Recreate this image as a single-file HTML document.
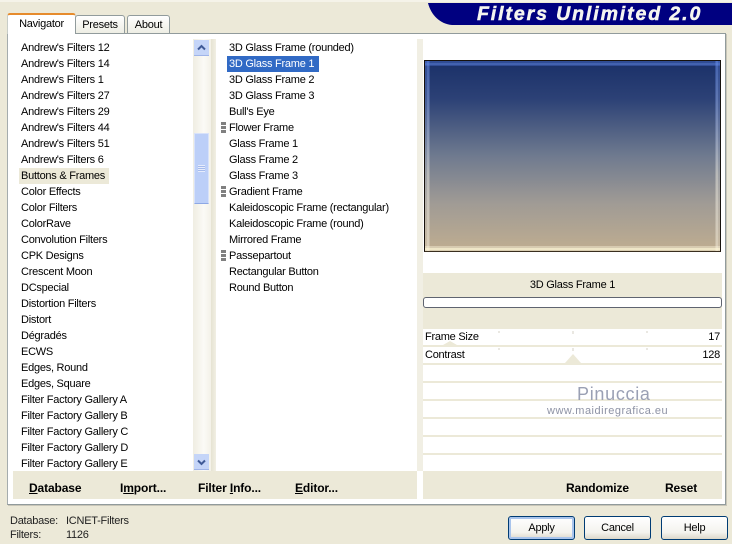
<!DOCTYPE html>
<html><head><meta charset="utf-8"><style>
html,body{margin:0;padding:0}
body{width:732px;height:544px;overflow:hidden;background:#ece9d8;position:relative;font:11px/16px "Liberation Sans",sans-serif;letter-spacing:-.25px;color:#000}
.a{position:absolute;white-space:nowrap}
.it{position:absolute;height:16px;line-height:16px;white-space:nowrap}
.b{font-weight:bold;font-size:12px;letter-spacing:-.12px;position:absolute;white-space:nowrap;line-height:16px}
.btn{position:absolute;top:516px;height:24px;box-sizing:border-box;border:1px solid #003c74;border-radius:3px;background:linear-gradient(#fff,#f4f3ee 70%,#dcd8ca);text-align:center;line-height:23px}
.hl{position:absolute;left:423px;width:299px;height:2px;background:#ece9d8}
</style></head><body>
<div class="a" style="left:0;top:0;width:732px;height:2px;background:#f5f3e9"></div>
<svg class="a" style="left:428px;top:3px" width="304" height="22"><path d="M0 0H304V22H24C12 21 3 12 0 0Z" fill="#000080"/></svg>
<div class="a" style="left:477px;top:4px;font:italic bold 19.5px/21px 'Liberation Sans',sans-serif;color:#f5f5f0;letter-spacing:1.9px;-webkit-text-stroke:.5px #f5f5f0">Filters Unlimited 2.0</div>

<div class="a" style="left:7px;top:33px;width:719px;height:472px;box-sizing:border-box;border:1px solid #919b9c;border-left-color:#a5acad;background:#fff;box-shadow:1px 1px 0 #c9c6b8"></div>
<div class="a" style="left:7px;top:13px;width:67px;height:19px;background:#fff;border:1px solid #c8cdc8;border-bottom:0;border-top:2px solid #e68b2c;border-radius:3px 3px 0 0;text-align:center;line-height:19px">Navigator</div>
<div class="a" style="left:75px;top:15px;width:48px;height:17px;border:1px solid #919b9c;border-radius:3px 3px 0 0;background:linear-gradient(#fff,#eeeee4);text-align:center;line-height:18px">Presets</div>
<div class="a" style="left:127px;top:15px;width:41px;height:17px;border:1px solid #919b9c;border-radius:3px 3px 0 0;background:linear-gradient(#fff,#eeeee4);text-align:center;line-height:18px">About</div>

<!-- left list -->
<div class="a" style="left:19px;top:168px;width:90px;height:16px;background:#ece9d8"></div>
<div class="it" style="left:21px;top:40px">Andrew's Filters 12</div>
<div class="it" style="left:21px;top:56px">Andrew's Filters 14</div>
<div class="it" style="left:21px;top:72px">Andrew's Filters 1</div>
<div class="it" style="left:21px;top:88px">Andrew's Filters 27</div>
<div class="it" style="left:21px;top:104px">Andrew's Filters 29</div>
<div class="it" style="left:21px;top:120px">Andrew's Filters 44</div>
<div class="it" style="left:21px;top:136px">Andrew's Filters 51</div>
<div class="it" style="left:21px;top:152px">Andrew's Filters 6</div>
<div class="it" style="left:21px;top:168px">Buttons &amp; Frames</div>
<div class="it" style="left:21px;top:184px">Color Effects</div>
<div class="it" style="left:21px;top:200px">Color Filters</div>
<div class="it" style="left:21px;top:216px">ColorRave</div>
<div class="it" style="left:21px;top:232px">Convolution Filters</div>
<div class="it" style="left:21px;top:248px">CPK Designs</div>
<div class="it" style="left:21px;top:264px">Crescent Moon</div>
<div class="it" style="left:21px;top:280px">DCspecial</div>
<div class="it" style="left:21px;top:296px">Distortion Filters</div>
<div class="it" style="left:21px;top:312px">Distort</div>
<div class="it" style="left:21px;top:328px">Dégradés</div>
<div class="it" style="left:21px;top:344px">ECWS</div>
<div class="it" style="left:21px;top:360px">Edges, Round</div>
<div class="it" style="left:21px;top:376px">Edges, Square</div>
<div class="it" style="left:21px;top:392px">Filter Factory Gallery A</div>
<div class="it" style="left:21px;top:408px">Filter Factory Gallery B</div>
<div class="it" style="left:21px;top:424px">Filter Factory Gallery C</div>
<div class="it" style="left:21px;top:440px">Filter Factory Gallery D</div>
<div class="it" style="left:21px;top:456px">Filter Factory Gallery E</div>

<!-- scrollbar -->
<div class="a" style="left:193px;top:39px;width:18px;height:432px;background:linear-gradient(90deg,#efede2,#fbfaf6 60%,#f3f1e8)"></div>
<div class="a" style="left:194px;top:40px;width:15px;height:16px;background:#c5d5f8;border-bottom:1px solid #9fb4e8;box-sizing:border-box"></div>
<svg class="a" style="left:194px;top:40px" width="15" height="16"><path d="M4 9.5L7.5 6L11 9.5" fill="none" stroke="#3f5a96" stroke-width="2"/></svg>
<div class="a" style="left:194px;top:133px;width:15px;height:71px;box-sizing:border-box;background:#bccff8;border:1px solid #d8e2fa;border-bottom-color:#8ea8e4"></div>
<div class="a" style="left:198px;top:165px;width:7px;height:7px;background:repeating-linear-gradient(#e6ecfc 0 1px,#a5bbec 1px 2px)"></div>
<div class="a" style="left:194px;top:454px;width:15px;height:16px;background:#c5d5f8;border-bottom:1px solid #9fb4e8;box-sizing:border-box"></div>
<svg class="a" style="left:194px;top:454px" width="15" height="16"><path d="M4 6.5L7.5 10L11 6.5" fill="none" stroke="#3f5a96" stroke-width="2"/></svg>
<div class="a" style="left:211px;top:39px;width:5px;height:432px;background:linear-gradient(90deg,#e6e3d2,#f1efe4)"></div>

<!-- middle list -->
<div class="a" style="left:227px;top:56px;width:92px;height:16px;background:#316ac5"></div>
<div class="it" style="left:229px;top:40px">3D Glass Frame (rounded)</div>
<div class="it" style="left:229px;top:56px;color:#fff">3D Glass Frame 1</div>
<div class="it" style="left:229px;top:72px">3D Glass Frame 2</div>
<div class="it" style="left:229px;top:88px">3D Glass Frame 3</div>
<div class="it" style="left:229px;top:104px">Bull's Eye</div>
<div class="it" style="left:229px;top:120px">Flower Frame</div>
<div class="it" style="left:229px;top:136px">Glass Frame 1</div>
<div class="it" style="left:229px;top:152px">Glass Frame 2</div>
<div class="it" style="left:229px;top:168px">Glass Frame 3</div>
<div class="it" style="left:229px;top:184px">Gradient Frame</div>
<div class="it" style="left:229px;top:200px">Kaleidoscopic Frame (rectangular)</div>
<div class="it" style="left:229px;top:216px">Kaleidoscopic Frame (round)</div>
<div class="it" style="left:229px;top:232px">Mirrored Frame</div>
<div class="it" style="left:229px;top:248px">Passepartout</div>
<div class="it" style="left:229px;top:264px">Rectangular Button</div>
<div class="it" style="left:229px;top:280px">Round Button</div>
<div class="a" style="left:221px;top:122px;width:5px;height:11px;background:repeating-linear-gradient(#808080 0 3px,transparent 3px 4px)"></div>
<div class="a" style="left:221px;top:186px;width:5px;height:11px;background:repeating-linear-gradient(#808080 0 3px,transparent 3px 4px)"></div>
<div class="a" style="left:221px;top:250px;width:5px;height:11px;background:repeating-linear-gradient(#808080 0 3px,transparent 3px 4px)"></div>
<div class="a" style="left:417px;top:39px;width:6px;height:432px;background:#f1efe4"></div>

<!-- preview -->
<div class="a" style="left:424px;top:60px;width:297px;height:192px;box-sizing:border-box;border:1px solid #17120c;border-bottom-color:#3a2f1f;background:linear-gradient(#1a3068,#2c4176 20%,#6f7a8f 50%,#a09b95 75%,#bfad90)"></div>
<div class="a" style="left:425px;top:61px;width:295px;height:5px;background:rgba(90,130,230,.35)"></div>
<div class="a" style="left:425px;top:63px;width:295px;height:2px;background:rgba(110,150,240,.3)"></div>
<div class="a" style="left:425px;top:61px;width:5px;height:190px;background:linear-gradient(rgba(90,130,230,.35),rgba(255,250,235,.22) 60%)"></div>
<div class="a" style="left:427px;top:61px;width:2px;height:190px;background:linear-gradient(rgba(110,150,240,.3),rgba(255,250,235,.28) 60%)"></div>
<div class="a" style="left:715px;top:61px;width:5px;height:190px;background:linear-gradient(rgba(90,130,230,.35),rgba(255,250,235,.22) 60%)"></div>
<div class="a" style="left:716px;top:61px;width:2px;height:190px;background:linear-gradient(rgba(110,150,240,.3),rgba(255,250,235,.28) 60%)"></div>
<div class="a" style="left:425px;top:246px;width:295px;height:5px;background:rgba(255,250,225,.4)"></div>
<div class="a" style="left:425px;top:248px;width:295px;height:2px;background:rgba(255,248,215,.6)"></div>

<!-- params -->
<div class="a" style="left:423px;top:273px;width:299px;height:56px;background:#ece9d8"></div>
<div class="a" style="left:423px;top:277px;width:299px;text-align:center">3D Glass Frame 1</div>
<div class="a" style="left:423px;top:297px;width:299px;height:11px;box-sizing:border-box;border:1px solid #5f6470;border-radius:3px;background:#fff"></div>
<div class="a" style="left:425px;top:329px">Frame Size</div>
<div class="a" style="right:12px;top:329px">17</div>
<div class="a" style="left:425px;top:347px">Contrast</div>
<div class="a" style="right:12px;top:347px">128</div>
<div class="hl" style="top:345px"></div>
<div class="hl" style="top:363px"></div>
<div class="hl" style="top:381px"></div>
<div class="hl" style="top:399px"></div>
<div class="hl" style="top:417px"></div>
<div class="hl" style="top:435px"></div>
<div class="hl" style="top:453px"></div>
<svg class="a" style="left:423px;top:329px" width="299" height="36"><path d="M76 2v2M150 2v3M224 2v2M76 19v2M150 19v3M224 19v2" stroke="#d4d1c4"/><path d="M142 34L150 25L158 34Z" fill="#ece9d8"/><path d="M20 16L27 12L34 16Z" fill="#ece9d8"/></svg>
<div class="a" style="left:577px;top:384px;font:18px/20px 'Liberation Sans',sans-serif;color:#9aa0b4;letter-spacing:.7px">Pinuccia</div>
<div class="a" style="left:547px;top:404px;font:11px/14px 'Liberation Sans',sans-serif;color:#8e93a5;letter-spacing:.5px">www.maidiregrafica.eu</div>

<!-- toolbars -->
<div class="a" style="left:13px;top:471px;width:404px;height:28px;background:#ece9d8"></div>
<div class="a" style="left:423px;top:471px;width:299px;height:28px;background:#ece9d8"></div>
<div class="b" style="left:29px;top:480px"><u>D</u>atabase</div>
<div class="b" style="left:120px;top:480px">I<u>m</u>port...</div>
<div class="b" style="left:198px;top:480px">Filter <u>I</u>nfo...</div>
<div class="b" style="left:295px;top:480px"><u>E</u>ditor...</div>
<div class="b" style="left:566px;top:480px">Randomize</div>
<div class="b" style="left:665px;top:480px">Reset</div>

<!-- status -->
<div class="a" style="left:10px;top:514px;line-height:14px;color:#222">Database:</div>
<div class="a" style="left:66px;top:514px;line-height:14px;color:#222">ICNET-Filters</div>
<div class="a" style="left:10px;top:528px;line-height:14px;color:#222">Filters:</div>
<div class="a" style="left:66px;top:528px;line-height:14px;color:#222">1126</div>

<div class="btn" style="left:508px;width:67px;box-shadow:inset 0 0 0 2px #a9c4ec">Apply</div>
<div class="btn" style="left:584px;width:67px">Cancel</div>
<div class="btn" style="left:661px;width:67px">Help</div>
</body></html>
